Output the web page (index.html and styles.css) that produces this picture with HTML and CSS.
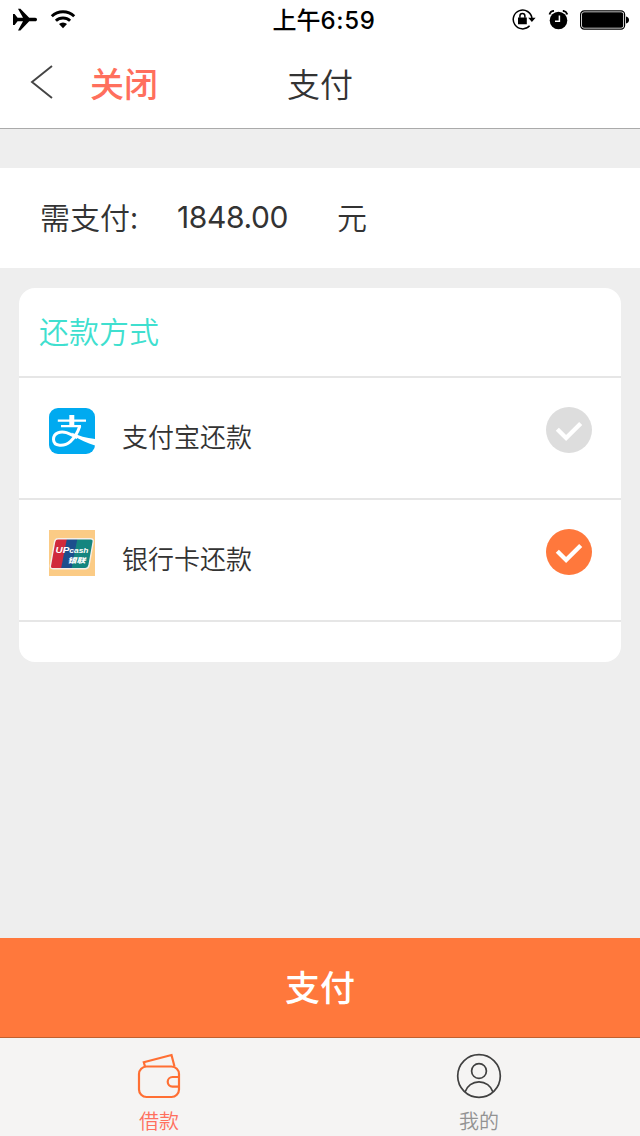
FILE: index.html
```html
<!DOCTYPE html>
<html lang="zh-CN">
<head>
  <meta charset="UTF-8" />
  <meta name="viewport" content="width=device-width, initial-scale=1" />
  <title>支付</title>
  <link rel="stylesheet" href="styles.css">
</head>
<body>

<div class="page">
  <div class="status-bar">
    <div class="status-left">
      <svg width="26" height="24" viewBox="0 0 26 24">
        <path d="M1 6h1.600l3 3.700h5.400L6 .8h2.400l8.800 8.900h6c1.100 0 1.800.8 1.800 1.800s-.7 1.800-1.800 1.800h-6L8.400 22.500H6l5-9.200H5.600l-3 3.700H1z"/>
      </svg>
      <svg width="26" height="20" viewBox="0 0 26 20">
        <path d="M1.800 6.300a16 16 0 0 1 22.400 0M5.900 10.800a10.300 10.300 0 0 1 14.200 0" fill="none" stroke="#000" stroke-width="2.900"/>
        <path d="M9 14.100a5.800 5.800 0 0 1 8 0l-4 4.200z"/>
      </svg>
    </div>
    <div class="status-time">上午<span class="clock">6:59</span></div>
    <div class="status-right">
      <svg class="lock" width="24" height="22" viewBox="0 0 24 22">
        <path d="M17.600 16.800A9.400 9.400 0 1 1 20 9.500" fill="none" stroke="#000" stroke-width="1.500"/>
        <path d="M16.200 8.800h7.400l-3.700 4.200zM6 8.600h8.800v6.600H6z"/>
        <path d="M7.900 8.800V6.900a2.500 2.500 0 0 1 5 0v1.900" fill="none" stroke="#000" stroke-width="1.500"/>
      </svg>
      <svg class="alarm" width="20" height="20" viewBox="0 0 20 20">
        <circle cx="10.500" cy="10.500" r="8.800"/>
        <path d="M1.500 4.500a5 5 0 0 1 4.500-3.700M19.300 4.500a5 5 0 0 0-4.500-3.700" fill="none" stroke="#000" stroke-width="1.800"/>
        <path d="M11.400 5.500v5.800H7" fill="none" stroke="#fff" stroke-width="1.500"/>
      </svg>
      <svg width="49" height="20" viewBox="0 0 49 20">
        <rect x=".6" y=".9" width="44" height="18.200" rx="3.600" fill="none" stroke="#000" stroke-width="1.200"/>
        <rect x="2" y="2.300" width="41.200" height="15.400" rx="2"/>
        <path d="M46 6.500c2 .4 3 1.700 3 3.500s-1 3.100-3 3.500z"/>
      </svg>
    </div>
  </div>

  <div class="nav-bar">
    <svg class="back" width="24" height="34" viewBox="0 0 24 34">
      <path d="M22 1L2 17l20 16" fill="none" stroke="#444" stroke-width="1.900"/>
    </svg>
    <div class="close">关闭</div>
    <div class="title">支付</div>
  </div>

  <div class="content">
    <div class="amount-row">
      <span class="label">需支付:</span>
      <span class="amount">1848.00</span>
      <span>元</span>
    </div>

    <div class="card">
      <div class="card-title">还款方式</div>
      <div class="method">
        <svg class="method-icon" width="46" height="46" viewBox="0 0 46 46">
          <rect width="46" height="46" rx="9" fill="#00aaf0"/>
          <g fill="none" stroke="#fff">
            <path d="M8.800 12.700H37M12 18.200h20" stroke-width="2.200"/>
            <path d="M22.800 7v11" stroke-width="5"/>
            <path d="M30.800 18c-2 6.500-5 11.500-9.500 15.600C15.500 38.700 4.500 38.900 4.500 31.300c0-6.200 7-8.700 13-6.600 4 1.400 8 3.600 11 5" stroke-width="3"/>
          </g>
          <path d="M22.500 24.500C30 28 37 30 46 31v6.500c-8-2.500-15-5.500-21-9.500z" fill="#fff"/>
        </svg>
        <span class="method-name">支付宝还款</span>
        <svg class="check" width="46" height="46" viewBox="0 0 46 46">
          <circle cx="23" cy="23" r="23"/>
          <path d="M11.300 22.300l8.800 8.700L34.700 16.500" fill="none" stroke="#fff" stroke-width="4.400"/>
        </svg>
      </div>
      <div class="method">
        <svg class="method-icon" width="46" height="46" viewBox="0 0 46 46">
          <defs>
            <clipPath id="bank"><path d="M9 8.800h32.500q3.200 0 2.700 3L40 35.500q-.7 3.200-3.800 3.200H4q-3.200 0-2.600-3.200l4.200-23.700q.6-3 3.400-3z"/></clipPath>
          </defs>
          <rect width="46" height="46" fill="#fbcb85"/>
          <g clip-path="url(#bank)">
            <path d="M0 8h46v31H0z" fill="#14857f"/>
            <path d="M0 8h28.500l-6 31H0z" fill="#1c4e8d"/>
            <path d="M0 8h18l-6 31H0z" fill="#d0293c"/>
          </g>
          <path d="M9 8.800h32.500q3.200 0 2.700 3L40 35.500q-.7 3.200-3.800 3.200H4q-3.200 0-2.600-3.200l4.200-23.700q.6-3 3.400-3z" fill="none" stroke="#f5efe8" stroke-width="1.400"/>
          <text class="bank-en" x="6.500" y="23" textLength="33" lengthAdjust="spacingAndGlyphs">UP<tspan class="bank-cash">cash</tspan></text>
          <text class="bank-cn" x="18.500" y="32.500" textLength="18" lengthAdjust="spacingAndGlyphs">银联</text>
        </svg>
        <span class="method-name">银行卡还款</span>
        <svg class="check active" width="46" height="46" viewBox="0 0 46 46">
          <circle cx="23" cy="23" r="23"/>
          <path d="M11.300 22.300l8.800 8.700L34.700 16.500" fill="none" stroke="#fff" stroke-width="4.400"/>
        </svg>
      </div>
    </div>
  </div>

  <div class="pay-btn">支付</div>

  <div class="tab-bar">
    <div class="tab active">
      <svg width="46" height="46" viewBox="0 0 46 46" fill="none" stroke="#ff6f33" stroke-width="2.200">
        <rect x="3" y="13.500" width="40" height="30.500" rx="7.500"/>
        <path d="M9 13.500L7.800 9.300 35.500 2l3 11.500"/>
        <path d="M43 24h-6.500a4.800 4.800 0 0 0 0 9.600H43"/>
      </svg>
      <span>借款</span>
    </div>
    <div class="tab">
      <svg width="46" height="46" viewBox="0 0 46 46" fill="none" stroke="#404040" stroke-width="1.700">
        <circle cx="23" cy="23" r="21.300"/>
        <circle cx="23" cy="18" r="7.400"/>
        <path d="M9 39a14.700 14.700 0 0 1 28 0"/>
      </svg>
      <span>我的</span>
    </div>
  </div>
</div>

</body>
</html>
```
FILE: styles.css
```css
* {
  margin: 0; padding: 0; box-sizing: border-box;
}
body {
  background-color: #eee;
  font-family: 'Noto Sans CJK SC', sans-serif;
  color: #333;
}
svg {
  display: block;
  flex: none;
}
.page {
  width: 640px;
  height: 1136px;
  display: flex;
  flex-direction: column;
  overflow: hidden;
}
.status-bar {
  height: 40px;
  padding: 0 11px 0 12px;
  background: #fff;
  color: #000;
  display: grid;
  grid-template-columns: 1fr auto 1fr;
  align-items: center;
}
.status-left, .status-right {
  display: flex;
  align-items: center;
}
.status-left {
  gap: 12px;
}
.status-right {
  justify-content: flex-end;
}
.lock {
  margin-right: 12px;
}
.alarm {
  margin-right: 12px;
}
.status-time {
  padding-left: 7px;
  font-size: 24px;
  line-height: 38px;
  font-weight: 500;
}
.clock {
  font-family: 'Inter', sans-serif;
  font-weight: 500;
  letter-spacing: .7px;
}
.nav-bar {
  height: 89px;
  padding-left: 30px;
  background: #fff;
  border-bottom: 1px solid #aaa;
  display: flex;
  align-items: center;
}
.back {
  margin-top: -4px;
}
.close {
  width: 197px;
  padding-left: 36px;
  font-size: 34px;
  line-height: 86px;
  margin-top: -2px;
  font-weight: 500;
  color: #ff6f5d;
}
.title {
  margin: -2px 0 0 36px;
  font-size: 33px;
  line-height: 86px;
  font-weight: 350;
}
.content {
  flex: 1;
  padding-top: 39px;
}
.amount-row {
  height: 100px;
  padding-left: 40px;
  background: #fff;
  display: flex;
  font-size: 30px;
  line-height: 97px;
  font-weight: 350;
}
.label {
  width: 137px;
}
.amount {
  width: 160px;
  font-family: 'Inter', sans-serif;
  font-weight: 400;
  line-height: 99px;
  letter-spacing: -.4px;
}
.card {
  height: 374px;
  margin: 20px 19px 0;
  background: #fff;
  border-radius: 16px;
}
.card-title {
  height: 90px;
  padding-left: 20px;
  border-bottom: 2px solid #e6e6e6;
  font-size: 30px;
  line-height: 84px;
  font-weight: 350;
  color: #3fdfcf;
}
.method {
  height: 122px;
  padding: 30px 29px 0 30px;
  border-bottom: 2px solid #e6e6e6;
  display: flex;
}
.method-name {
  flex: 1;
  padding-left: 27px;
  font-size: 26px;
  font-weight: 350;
  line-height: 56px;
}
.check {
  margin-top: -1px;
  fill: #ddd;
}
.check.active {
  fill: #ff783c;
}
.bank-en {
  font: italic bold 9.5px 'Liberation Sans', sans-serif;
  fill: #fff;
}
.bank-cash {
  font-size: 8px;
}
.bank-cn {
  font: italic 900 7px 'Noto Sans CJK SC', sans-serif;
  fill: #fff;
}
.pay-btn {
  height: 100px;
  background: #ff783c;
  border-bottom: 1px solid #c0602f;
  color: #fff;
  font-size: 35px;
  font-weight: 500;
  line-height: 96px;
  text-align: center;
}
.tab-bar {
  height: 98px;
  background: #f5f4f3;
  display: flex;
}
.tab {
  width: 320px;
  padding: 15px 2px 0 0;
  display: flex;
  flex-direction: column;
  align-items: center;
  font-size: 20px;
  font-weight: 350;
  line-height: 28px;
  color: #929292;
}
.tab span {
  margin-top: 8px;
}
.tab.active {
  color: #ff6f5d;
}
```
